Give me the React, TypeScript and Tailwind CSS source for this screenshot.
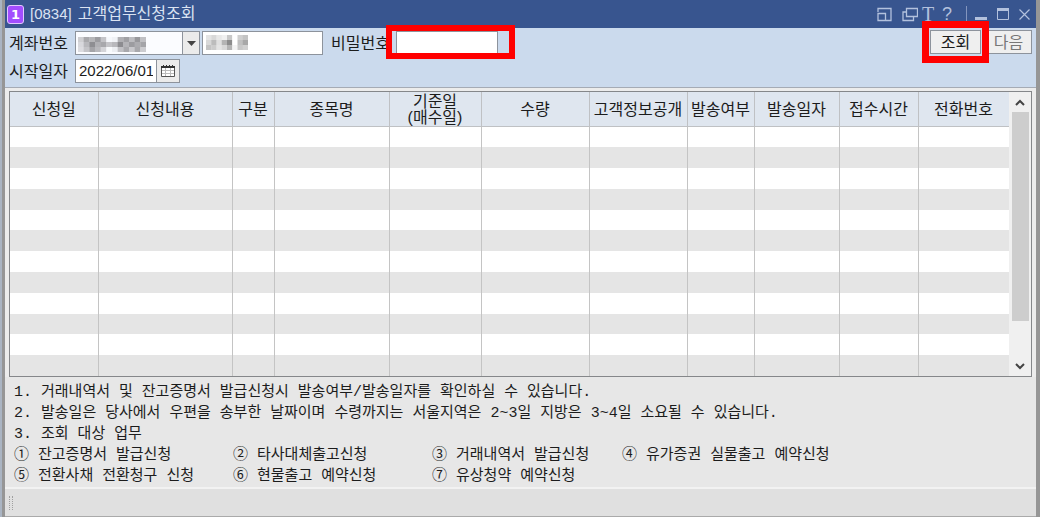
const COLUMNS = [
  { label: '신청일', width: 'w-[88px]' },
  { label: '신청내용', width: 'w-[134px]' },
  { label: '구분', width: 'w-[42px]' },
  { label: '종목명', width: 'w-[115px]' },
  { label: '기준일', sub: '(매수일)', width: 'w-[92px]' },
  { label: '수량', width: 'w-[108px]' },
  { label: '고객정보공개', width: 'w-[98px]' },
  { label: '발송여부', width: 'w-[67px]' },
  { label: '발송일자', width: 'w-[85px]' },
  { label: '접수시간', width: 'w-[79px]' },
  { label: '전화번호', width: 'w-[91px]' },
];

const ROWS = Array.from({ length: 12 }, (_, i) => i);

const NOTES = [
  '1. 거래내역서 및 잔고증명서 발급신청시 발송여부/발송일자를 확인하실 수 있습니다.',
  '2. 발송일은 당사에서 우편을 송부한 날짜이며 수령까지는 서울지역은 2~3일 지방은 3~4일 소요될 수 있습니다.',
  '3. 조회 대상 업무',
];

const SERVICES = [
  '① 잔고증명서 발급신청',
  '② 타사대체출고신청',
  '③ 거래내역서 발급신청',
  '④ 유가증권 실물출고 예약신청',
  '⑤ 전환사채 전환청구 신청',
  '⑥ 현물출고 예약신청',
  '⑦ 유상청약 예약신청',
];

// Grey levels of the masked account number and owner name
const ACCOUNT_MASK = [
  ['#cfcfd2', '#a9a9ac', '#b5b5b8', '#9c9ca0', '#c4c4c8', '#f6f8fc', '#f0f2f6', '#b0b0b4', '#a0a0a4', '#bcbcc0', '#98989c', '#c0c0c4'],
  ['#d8d8dc', '#b8b8bc', '#8e8e92', '#b0b0b4', '#a8a8ac', '#c4c4c8', '#b8b8bc', '#8c8c90', '#b4b4b8', '#9c9ca0', '#acacb0', '#a4a4a8'],
  ['#dcdce0', '#c4c4c8', '#a4a4a8', '#b8b8bc', '#d4d4d8', '#f8fafc', '#eceef2', '#c0c0c4', '#a8a8ac', '#c8c8cc', '#a8a8ac', '#ccccd0'],
];
const NAME_MASK = [
  ['#e4e4e4', '#d8d8d8', '#e8e8e8', '#f0f0f0', '#c8c8c8', '#ffffff', '#d0d0d0', '#c4c4c4'],
  ['#d8d8d8', '#bcbcbc', '#e0e0e0', '#b4b4b4', '#8c8c8c', '#ffffff', '#c0c0c0', '#a8a8a8'],
  ['#c4c4c4', '#cccccc', '#e4e4e4', '#d8d8d8', '#b4b4b4', '#f4f4f4', '#c8c8c8', '#d0d0d0'],
];

function Mask({ cells, className }: { cells: string[][]; className: string }) {
  return (
    <svg
      className={`pointer-events-none absolute ${className}`}
      viewBox={`0 0 ${cells[0].length} ${cells.length}`}
      preserveAspectRatio="none"
      aria-hidden="true"
    >
      {cells.map((row, y) =>
        row.map((fill, x) => <rect key={`${x}-${y}`} x={x} y={y} width="1.05" height="1.05" fill={fill} />)
      )}
    </svg>
  );
}

function TitleBar() {
  return (
    <header className="flex h-7 shrink-0 items-center bg-[#38558f] pr-1.5 pl-[2px] text-[#dbe3f2]">
      <span className="flex h-[19px] w-[17px] items-center justify-center rounded-[3px] border border-[#e2c8ff] bg-[#a34dff] font-['DejaVu_Sans'] text-[13px] leading-none font-bold text-white">
        1
      </span>
      <h1 className="flex flex-1 items-center gap-1.5 pl-1.5 text-base leading-5">
        <span className="text-[15px]">[0834]</span>
        <span>고객업무신청조회</span>
      </h1>
      <div className="flex items-center text-[#b3c1dd]">
        <button type="button" aria-label="화면 축소" className="mr-2.5">
          <svg width="15" height="15" viewBox="0 0 15 15" fill="none" stroke="currentColor" strokeWidth="1.3">
            <path d="M1 5V1.500h13V13.500H9" />
            <path d="M1 6.500h7.500v7H1z" />
          </svg>
        </button>
        <button type="button" aria-label="화면 복사" className="mr-1">
          <svg width="16" height="15" viewBox="0 0 16 15" fill="none" stroke="currentColor" strokeWidth="1.3">
            <path d="M4.500 1.500h11v8h-11z" />
            <path d="M4.500 5H1v8.500h10.500v-4" />
          </svg>
        </button>
        <button type="button" aria-label="글꼴" className="mr-2 w-3 font-['Liberation_Serif'] text-xl leading-5">
          T
        </button>
        <button type="button" aria-label="도움말" className="mr-3.5 w-2.5 text-lg leading-5">
          ?
        </button>
        <span className="mr-2 h-4 w-px bg-[#8395be]" />
        <button type="button" aria-label="최소화" className="mr-2.5">
          <svg width="12" height="14" viewBox="0 0 12 14" fill="currentColor">
            <path d="M0 10h12v3H0z" />
          </svg>
        </button>
        <button type="button" aria-label="최대화" className="mr-2.5">
          <svg width="12" height="12" viewBox="0 0 12 12" fill="none" stroke="currentColor">
            <path d="M.5 1.500h11v10H.5z" />
            <path d="M0 1.500h12" strokeWidth="3" />
          </svg>
        </button>
        <button type="button" aria-label="닫기">
          <svg width="11" height="11" viewBox="0 0 11 11" fill="none" stroke="currentColor" strokeWidth="1.2">
            <path d="M.5.5l10 10M10.500.5l-10 10" />
          </svg>
        </button>
      </div>
    </header>
  );
}

function SearchForm() {
  return (
    <form
      className="h-[60px] shrink-0 border-b border-[#a5abb5] bg-[#cbdaed] pt-[3px] pr-[4px] pl-1 text-base leading-[26px]"
      onSubmit={e => e.preventDefault()}
    >
      <div className="flex h-6 items-center">
        <label htmlFor="account" className="w-[66px] shrink-0 pt-[2px]">
          계좌번호
        </label>
        <div className="relative">
          <select
            id="account"
            className="block h-6 w-[125px] appearance-none border border-[#8d939c] bg-[#fbfcff]"
          ></select>
          <Mask cells={ACCOUNT_MASK} className="top-[6px] left-[3px] h-[15px] w-[68px]" />
          <span className="pointer-events-none absolute inset-y-px right-px flex w-[17px] items-center justify-center border-l border-[#8d939c] bg-[#ebebeb]">
            <svg width="9" height="5" viewBox="0 0 9 5" fill="#444">
              <path d="M0 0h9L4.500 5z" />
            </svg>
          </span>
        </div>
        <div className="relative ml-[2px]">
          <input aria-label="고객명" className="block h-6 w-[121px] border border-[#8d939c] bg-white" />
          <Mask cells={NAME_MASK} className="top-[4px] left-[4px] h-[15px] w-[42px]" />
        </div>
        <label htmlFor="password" className="ml-2 w-[57px] shrink-0 pt-[2px] whitespace-nowrap">
          비밀번호
        </label>
        <div className="relative ml-2 pr-3">
          <input
            id="password"
            type="password"
            className="block h-6 w-[102px] border border-[#8d939c] bg-white"
          />
          <span className="pointer-events-none absolute -top-[6px] -left-[10px] h-[34px] w-[129px] border-[6px] border-[#ff0000]" />
        </div>
        <div className="ml-auto flex">
          <div className="relative">
            <button type="submit" className="h-6 w-[51px] border border-[#8d939c] bg-[#efefef] leading-6">
              조회
            </button>
            <span className="pointer-events-none absolute -inset-x-[8px] -top-[9px] -bottom-[7px] border-[7px] border-[#ff0000]" />
          </div>
          <button type="button" className="ml-1 h-6 w-[47px] border border-[#8d939c] bg-[#efefef] leading-6 text-[#777]">
            다음
          </button>
        </div>
      </div>
      <div className="mt-1 flex h-6 items-center">
        <label htmlFor="start-date" className="w-[66px] shrink-0 pt-[2px]">
          시작일자
        </label>
        <input
          id="start-date"
          type="text"
          defaultValue="2022/06/01"
          className="h-6 w-[82px] border border-[#8d939c] bg-white px-[3px] text-[15px]"
        />
        <button
          type="button"
          aria-label="달력"
          className="flex h-6 w-[23px] items-center justify-center border border-l-0 border-[#8d939c] bg-[#ebebeb]"
        >
          <svg width="14" height="12" viewBox="0 0 14 12" fill="none" stroke="#555">
            <path d="M.5 2.500h13v9H.5z" fill="#fff" />
            <path d="M1 5.500h12M1 8.500h12M4.500 3v8M9.500 3v8" stroke="#bbb" />
            <path d="M0 2h14" stroke="#333" strokeWidth="2" />
            <path d="M2.500 0v2M5.500 0v2M8.500 0v2M11.500 0v2" stroke="#333" />
          </svg>
        </button>
      </div>
    </form>
  );
}

function ResultTable() {
  return (
    <div className="mx-1 mt-[3px] flex min-h-0 flex-1 border border-[#85878a] bg-[#e5e5e5]">
      <div className="min-w-0 flex-1">
        <table className="h-full w-full table-fixed border-collapse text-base leading-4">
          <colgroup>
            {COLUMNS.map(col => (
              <col key={col.label} className={col.width} />
            ))}
          </colgroup>
          <thead>
            <tr className="h-[34px] bg-[#dfe6ef]">
              {COLUMNS.map(col => (
                <th
                  key={col.label}
                  className="border-r border-b border-[#bfc1c4] p-0 pt-[2px] font-normal whitespace-nowrap"
                >
                  {col.label}
                  {col.sub && <span className="block">{col.sub}</span>}
                </th>
              ))}
            </tr>
          </thead>
          <tbody>
            {ROWS.map(row => (
              <tr key={row} className="h-5 odd:bg-white even:bg-[#e5e5e5]">
                {COLUMNS.map(col => (
                  <td key={col.label} className="border-r border-[#c4c4c4] p-0"></td>
                ))}
              </tr>
            ))}
          </tbody>
        </table>
      </div>
      <div className="flex w-[22px] shrink-0 flex-col items-center bg-[#f0f0f0]">
        <button type="button" aria-label="위로" className="flex h-5 w-full shrink-0 items-center justify-center">
          <svg width="10" height="7" viewBox="0 0 10 7" fill="none" stroke="#444" strokeWidth="2">
            <path d="M1 6l4-4 4 4" />
          </svg>
        </button>
        <div className="w-[17px] flex-1 bg-[#cdcdcd]" />
        <button type="button" aria-label="아래로" className="mt-[35px] flex h-5 w-full shrink-0 items-center justify-center">
          <svg width="10" height="7" viewBox="0 0 10 7" fill="none" stroke="#444" strokeWidth="2">
            <path d="M1 1l4 4 4-4" />
          </svg>
        </button>
      </div>
    </div>
  );
}

function Notes() {
  return (
    <section className="shrink-0 bg-[#e7e7e7] pt-[5px] pr-2 pl-[9px] font-['Liberation_Mono','Noto_Sans_CJK_KR',monospace] text-[15px] leading-[21px] whitespace-nowrap">
      {NOTES.map(note => (
        <p key={note}>{note}</p>
      ))}
      <ul className="grid grid-cols-[219px_199px_190px_1fr]">
        {SERVICES.map(service => (
          <li key={service}>{service}</li>
        ))}
      </ul>
    </section>
  );
}

export default function App() {
  return (
    <div className="flex h-screen min-h-[420px] bg-[#aab4c2] pl-[2px] font-['Liberation_Sans','Noto_Sans_CJK_KR',sans-serif] text-[#1c1c1c]">
      <div className="flex min-w-0 flex-1 flex-col border-r-4 border-l-[3px] border-[#969696] bg-[#ececec]">
        <TitleBar />
        <SearchForm />
        <ResultTable />
        <Notes />
        <footer className="flex h-[30px] shrink-0 items-center border-t-2 border-b border-t-[#f2f2f2] border-b-[#aaa] bg-[#e0e0e0] pl-1">
          <span className="h-3.5 w-1 border-x border-dotted border-[#a0a0a0]" />
        </footer>
      </div>
    </div>
  );
}
